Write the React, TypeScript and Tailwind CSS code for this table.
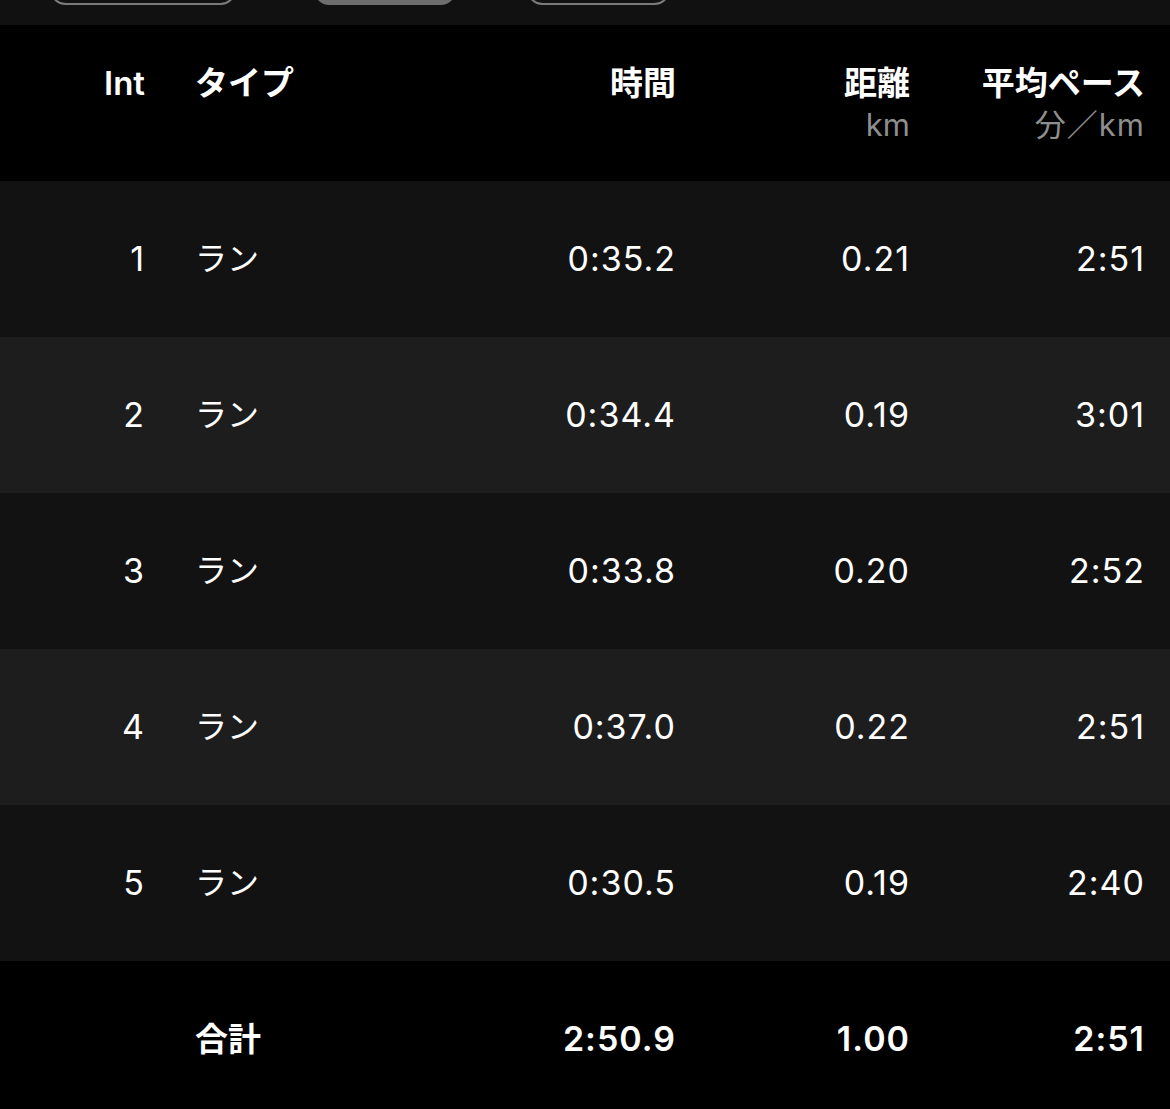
import React from "react";

const rows = [
  { n: "1", t: "0:35.2", d: "0.21", p: "2:51" },
  { n: "2", t: "0:34.4", d: "0.19", p: "3:01" },
  { n: "3", t: "0:33.8", d: "0.20", p: "2:52" },
  { n: "4", t: "0:37.0", d: "0.22", p: "2:51" },
  { n: "5", t: "0:30.5", d: "0.19", p: "2:40" },
];

const font = { fontFamily: '"Inter", "Noto Sans CJK JP", sans-serif' };

export default function App() {
  return (
    <div className="w-[1170px] h-[1109px] overflow-hidden bg-black text-white" style={font}>
      <div className="h-[25px] bg-[#111111] flex items-start overflow-hidden">
        <div className="ml-[50px] -mt-[26px] w-[186px] h-[31px] rounded-full border-2 border-[#7a7a7a]" />
        <div className="ml-[78px] -mt-[26px] w-[142px] h-[31px] rounded-full bg-[#6e6e6e]" />
        <div className="ml-[71px] -mt-[26px] w-[143px] h-[31px] rounded-full border-2 border-[#7a7a7a]" />
      </div>
      <div className="h-[156px] flex items-start pt-[38px] text-[33px] font-semibold leading-[40px]">
        <div className="w-[145px] text-right text-[33px]">Int</div>
        <div className="ml-[50px] w-[200px]">タイプ</div>
        <div className="w-[281px] text-right">時間</div>
        <div className="w-[234px] text-right">
          <div>距離</div>
          <div className="text-[#8e8e8e] font-normal text-[31px] leading-[44px]">km</div>
        </div>
        <div className="w-[235px] text-right">
          <div>平均ペース</div>
          <div className="text-[#8e8e8e] font-normal text-[31px] leading-[44px] tracking-[1px]">分／km</div>
        </div>
      </div>
      {rows.map((r, i) => (
        <div
          key={r.n}
          className={`h-[156px] flex items-center text-[34px] leading-[40px] tracking-[1px] ${i % 2 === 0 ? "bg-[#121212]" : "bg-[#1d1d1d]"}`}
        >
          <div className="w-[145px] text-right">{r.n}</div>
          <div className="ml-[50px] w-[200px] text-[32px] tracking-normal">ラン</div>
          <div className="w-[281px] text-right">{r.t}</div>
          <div className="w-[234px] text-right">{r.d}</div>
          <div className="w-[235px] text-right">{r.p}</div>
        </div>
      ))}
      <div className="h-[156px] flex items-center text-[34px] leading-[40px] font-semibold tracking-[1px]">
        <div className="w-[145px] text-right"></div>
        <div className="ml-[50px] w-[200px] text-[33px] tracking-normal">合計</div>
        <div className="w-[281px] text-right">2:50.9</div>
        <div className="w-[234px] text-right">1.00</div>
        <div className="w-[235px] text-right">2:51</div>
      </div>
    </div>
  );
}
